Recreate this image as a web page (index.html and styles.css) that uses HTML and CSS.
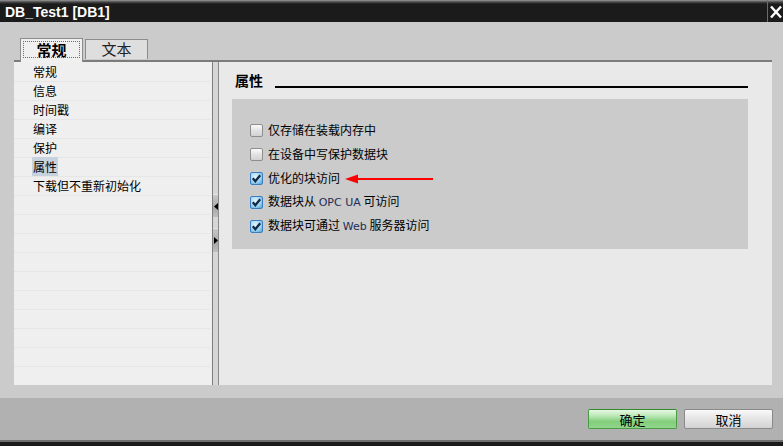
FILE: index.html
```html
<!DOCTYPE html>
<html lang="zh-CN">
<head>
    <meta charset="UTF-8">
    <meta name="viewport" content="width=device-width, initial-scale=1.0">
    <link rel="stylesheet" href="styles.css">
    <title>DB_Test1 [DB1]</title>
</head>
<body>
    <div class="window">
        <div class="titlebar">
            <span class="title">DB_Test1 [DB1]</span>
            <button type="button" class="close" aria-label="关闭">
                <svg width="12" height="14" viewBox="0 0 12 14">
                    <path d="M1 1.5 L11 12.5 M11 1.5 L1 12.5" stroke="#fff" stroke-width="2.4" fill="none"/>
                </svg>
            </button>
        </div>

        <div class="content">
            <div class="tabs">
                <div class="tab active"><span>常规</span></div>
                <div class="tab">文本</div>
            </div>
            <div class="frame">
                <div class="nav">
                    <ul class="nav-list">
                        <li>常规</li>
                        <li>信息</li>
                        <li>时间戳</li>
                        <li>编译</li>
                        <li>保护</li>
                        <li><span class="selected">属性</span></li>
                        <li>下载但不重新初始化</li>
                    </ul>
                </div>
                <div class="splitter">
                    <div class="split-btn">
                        <svg width="4" height="7" viewBox="0 0 4 7"><path d="M4 0 L0 3.5 L4 7 Z" fill="#000"/></svg>
                    </div>
                    <div class="split-btn">
                        <svg width="4" height="7" viewBox="0 0 4 7"><path d="M0 0 L4 3.5 L0 7 Z" fill="#000"/></svg>
                    </div>
                </div>
                <div class="panel">
                    <div class="section-head">
                        <span class="section-title">属性</span>
                        <span class="section-line"></span>
                    </div>
                    <div class="section-box">
                        <div class="option">
                            <span class="check"></span>
                            <span>仅存储在装载内存中</span>
                        </div>
                        <div class="option">
                            <span class="check"></span>
                            <span>在设备中写保护数据块</span>
                        </div>
                        <div class="option">
                            <span class="check checked">
                                <svg width="13" height="13" viewBox="0 0 13 13"><path d="M2.8 6.3 L5.3 9.2 L10.2 3.2" stroke="#10283f" stroke-width="2.2" fill="none"/></svg>
                            </span>
                            <span>优化的块访问</span>
                            <svg class="arrow" width="88" height="10" viewBox="0 0 88 10">
                                <path d="M10 5 L88 5" stroke="#f00" stroke-width="2"/>
                                <path d="M0 5 L13 0.5 L13 9.5 Z" fill="#f00"/>
                            </svg>
                        </div>
                        <div class="option">
                            <span class="check checked">
                                <svg width="13" height="13" viewBox="0 0 13 13"><path d="M2.8 6.3 L5.3 9.2 L10.2 3.2" stroke="#10283f" stroke-width="2.2" fill="none"/></svg>
                            </span>
                            <span>数据块从 <span class="latin">OPC UA</span> 可访问</span>
                        </div>
                        <div class="option">
                            <span class="check checked">
                                <svg width="13" height="13" viewBox="0 0 13 13"><path d="M2.8 6.3 L5.3 9.2 L10.2 3.2" stroke="#10283f" stroke-width="2.2" fill="none"/></svg>
                            </span>
                            <span>数据块可通过 <span class="latin">Web</span> 服务器访问</span>
                        </div>
                    </div>
                </div>
            </div>
        </div>

        <div class="footer">
            <button type="button" class="btn btn-ok">确定</button>
            <button type="button" class="btn">取消</button>
        </div>
        <div class="bottom-edge"></div>
    </div>
</body>
</html>
```

FILE: styles.css
```css
* {
    margin: 0;
    padding: 0;
    box-sizing: border-box;
}
body {
    background: #cbcbcb;
    font-family: "Noto Sans CJK SC", "Liberation Sans", sans-serif;
    font-size: 12px;
    color: #000;
}
.window {
    width: 783px;
    height: 446px;
    display: flex;
    flex-direction: column;
}
.titlebar {
    height: 22px;
    background: linear-gradient(to bottom, #9a9a9a 0, #4a4a4a 2px, #1b1b1b 4px, #1b1b1b 100%);
    display: flex;
    justify-content: space-between;
    align-items: stretch;
}
.title {
    font-family: "Liberation Sans", sans-serif;
    font-weight: bold;
    font-size: 14px;
    line-height: 24px;
    color: #fff;
    padding-left: 5px;
}
.close {
    width: 16px;
    background: none;
    border: none;
    border-left: 1px solid #6a6a6a;
    display: flex;
    align-items: center;
    justify-content: center;
    padding-top: 2px;
}

.content {
    height: 376px;
    padding: 16px 11px 13px 14px;
    display: flex;
    flex-direction: column;
}
.tabs {
    display: flex;
    gap: 2px;
    height: 22px;
    margin-left: 6px;
}
.tab {
    width: 63px;
    height: 20px;
    margin-top: 1px;
    border: 1px solid #8c8c8c;
    border-bottom: none;
    background: #dedede;
    font-size: 15px;
    line-height: 18px;
    color: #222;
    text-align: center;
}
.tab.active {
    height: 24px;
    margin-top: 0;
    position: relative;
    z-index: 1;
    background: #f0f0f0;
    font-weight: bold;
    color: #000;
    padding: 2px;
}
.tab.active span {
    display: block;
    height: 17px;
    border: 1px dotted #5a6d96;
    line-height: 15px;
}

.frame {
    height: 325px;
    border-top: 2px solid #7c7c7c;
    display: flex;
}
.nav {
    width: 198px;
    background: #efefef;
    padding-top: 1px;
}
.nav-list {
    list-style: none;
    height: 100%;
    margin-right: 2px;
    background: repeating-linear-gradient(to bottom, #efefef 0, #efefef 18px, #e6e6e6 18px, #e6e6e6 19px);
}
.nav-list li {
    height: 19px;
    line-height: 18px;
    padding-left: 19px;
}
.selected {
    display: inline-block;
    background: #c6d2de;
    padding: 0 1px;
    margin-left: -1px;
    height: 19px;
    margin-top: -1px;
    line-height: 20px;
}
.splitter {
    width: 7px;
    background: #d6d6d6;
    border-left: 1px solid #7e7e7e;
    border-right: 1px solid #8a8a8a;
    display: flex;
    flex-direction: column;
    gap: 11px;
    padding-top: 132px;
}
.split-btn {
    height: 23px;
    background: linear-gradient(to bottom, #c8c8c8 0, #a8a8a8 60%, #bdbdbd 100%);
    border-top: 1px solid #e6e6e6;
    display: flex;
    align-items: center;
    justify-content: center;
}
.split-btn + .split-btn {
    height: 24px;
}

.panel {
    flex: 1;
    background: #e9e9e9;
    padding: 9px 24px 0 13px;
}
.section-head {
    display: flex;
    align-items: flex-end;
    height: 18px;
    margin-bottom: 10px;
}
.section-title {
    font-size: 14px;
    font-weight: bold;
    line-height: 18px;
    margin-left: 3px;
    margin-right: 12px;
}
.section-line {
    flex: 1;
    border-bottom: 2px solid #000;
    margin-bottom: 1px;
}
.section-box {
    height: 150px;
    background: #cbcbcb;
    padding: 19px 0 0 18px;
}
.option {
    display: flex;
    align-items: center;
    height: 24px;
    line-height: 16px;
}
.check {
    width: 13px;
    height: 13px;
    margin-right: 5px;
    border: 1px solid #8e8e8e;
    border-radius: 2px;
    background: linear-gradient(to bottom, #fbfbfb 0, #e2e2e2 50%, #d2d2d2 100%);
    display: flex;
}
.check.checked {
    border-color: #3b7fc0;
    background: radial-gradient(circle at 40% 35%, #e4f5fe 0, #9fd3f3 55%, #4c9fd9 100%);
}
.check svg {
    margin: -1px;
}
.latin {
    font-family: "DejaVu Sans", sans-serif;
    font-size: 11px;
    color: #1e2d55;
}
.arrow {
    margin-left: 5px;
    margin-top: 1px;
}

.footer {
    height: 42px;
    background: #b1b1b1;
    display: flex;
    justify-content: flex-end;
    gap: 7px;
    padding: 11px 10px 0 0;
}
.btn {
    width: 89px;
    height: 20px;
    border: 1px solid #8a8a8a;
    border-radius: 2px;
    background: linear-gradient(to bottom, #fafafa 0, #e6e6e6 45%, #d3d3d3 100%);
    font-family: "Noto Sans CJK SC", sans-serif;
    font-size: 13px;
    line-height: 17px;
    color: #000;
}
.btn-ok {
    border-color: #4a9a46;
    border-top-color: #2f8a2c;
    background: linear-gradient(to bottom, #e8f8e5 0, #b7e6b1 35%, #82cd7b 65%, #93d68d 100%);
}
.bottom-edge {
    height: 6px;
    background: #1b1b1b;
    border-top: 2px solid #6e6e6e;
}
```
